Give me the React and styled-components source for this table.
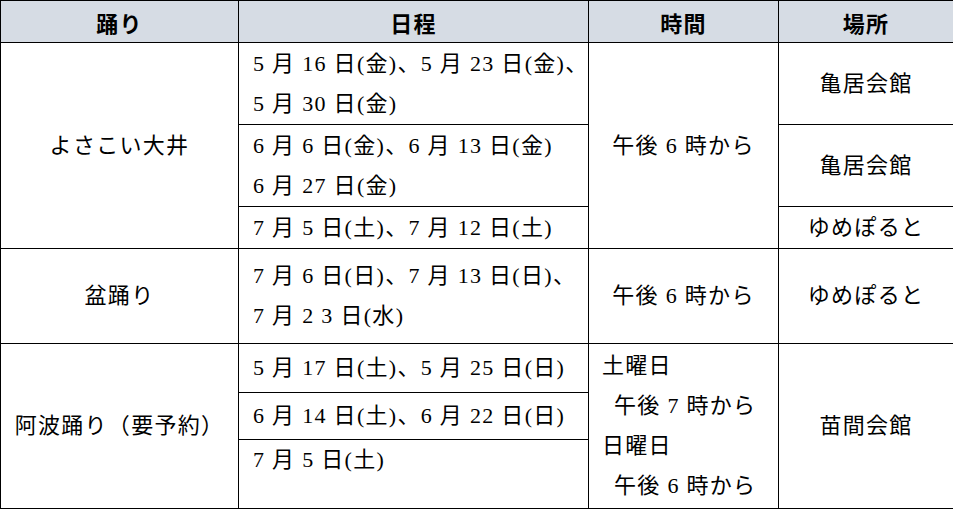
import React from 'react';
import styled, { createGlobalStyle } from 'styled-components';

const GlobalStyle = createGlobalStyle`
  html, body {
    margin: 0;
    padding: 0;
    background: #fff;
  }
  body {
    font-family: "Liberation Serif", "Noto Sans CJK JP", serif;
    color: #000;
  }
`;

const Table = styled.table`
  width: 953px;
  border-collapse: collapse;
  table-layout: fixed;
  font-size: 22px;
  letter-spacing: 1.3px;
`;

const HeadCell = styled.th`
  background: #d6dce4;
  border: 1px solid #000;
  font-weight: 700;
  font-size: 22px;
  height: 41px;
  padding: 0;
  text-align: center;
`;

const Row = styled.tr`
  height: ${(p) => p.h}px;
`;

const Cell = styled.td`
  border: 1px solid #000;
  padding: ${(p) => (p.left ? '0 0 0 14px' : '0')};
  text-align: ${(p) => (p.left ? 'left' : 'center')};
  vertical-align: ${(p) => (p.top ? 'top' : 'middle')};
  line-height: 40px;
  white-space: nowrap;
`;

const TimeBlock = styled.div`
  text-align: left;
  padding-left: 13px;
  line-height: 40px;
`;

const Indent = styled.div`
  padding-left: 12px;
`;

const App = () => {
  return (
    <>
      <GlobalStyle />
      <Table>
        <colgroup>
          <col style={{ width: 238 }} />
          <col style={{ width: 350 }} />
          <col style={{ width: 190 }} />
          <col style={{ width: 175 }} />
        </colgroup>
        <thead>
          <tr>
            <HeadCell>踊り</HeadCell>
            <HeadCell>日程</HeadCell>
            <HeadCell>時間</HeadCell>
            <HeadCell>場所</HeadCell>
          </tr>
        </thead>
        <tbody>
          <Row h={82}>
            <Cell rowSpan={3}>よさこい大井</Cell>
            <Cell left>
              5 月 16 日(金)、5 月 23 日(金)、
              <br />
              5 月 30 日(金)
            </Cell>
            <Cell rowSpan={3}>午後 6 時から</Cell>
            <Cell>亀居会館</Cell>
          </Row>
          <Row h={82}>
            <Cell left>
              6 月 6 日(金)、6 月 13 日(金)
              <br />
              6 月 27 日(金)
            </Cell>
            <Cell>亀居会館</Cell>
          </Row>
          <Row h={42}>
            <Cell left>7 月 5 日(土)、7 月 12 日(土)</Cell>
            <Cell>ゆめぽると</Cell>
          </Row>
          <Row h={95}>
            <Cell>盆踊り</Cell>
            <Cell left>
              7 月 6 日(日)、7 月 13 日(日)、
              <br />
              7 月 2 3 日(水)
            </Cell>
            <Cell>午後 6 時から</Cell>
            <Cell>ゆめぽると</Cell>
          </Row>
          <Row h={49}>
            <Cell rowSpan={3}>阿波踊り（要予約）</Cell>
            <Cell left>5 月 17 日(土)、5 月 25 日(日)</Cell>
            <Cell rowSpan={3}>
              <TimeBlock>
                <div>土曜日</div>
                <Indent>午後 7 時から</Indent>
                <div>日曜日</div>
                <Indent>午後 6 時から</Indent>
              </TimeBlock>
            </Cell>
            <Cell rowSpan={3}>苗間会館</Cell>
          </Row>
          <Row h={47}>
            <Cell left>6 月 14 日(土)、6 月 22 日(日)</Cell>
          </Row>
          <Row h={69}>
            <Cell left top>
              7 月 5 日(土)
            </Cell>
          </Row>
        </tbody>
      </Table>
    </>
  );
};

export default App;
